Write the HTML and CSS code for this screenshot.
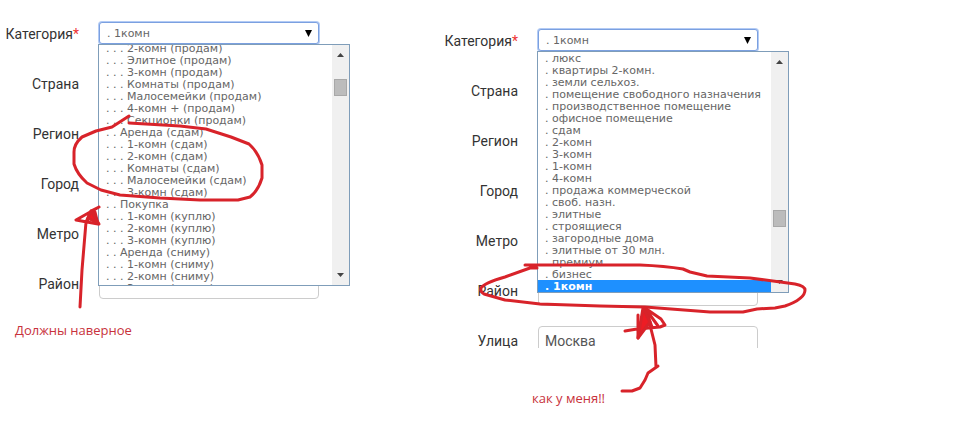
FILE: index.html
```html
<!DOCTYPE html>
<html lang="ru">
<head>
<meta charset="utf-8">
<title>Категория</title>
<link rel="stylesheet" href="styles.css">
</head>
<body>
<main class="compare">
  <section class="panel">
    <form class="form">
      <div class="row">
        <label class="label" for="category-a">Категория<span class="required">*</span></label>
        <div class="field">
          <select class="select" id="category-a"><option>. 1комн</option></select>
          <svg class="caret" viewBox="0 0 7 7" aria-hidden="true"><path d="M0 0h7L3.500 7z"/></svg>
          <div class="dropdown">
            <ul class="options options-scrolled" role="listbox" aria-label="Категория">
              <li role="option">. . . 2-комн (продам)</li>
              <li role="option">. . . Элитное (продам)</li>
              <li role="option">. . . 3-комн (продам)</li>
              <li role="option">. . . Комнаты (продам)</li>
              <li role="option">. . . Малосемейки (продам)</li>
              <li role="option">. . . 4-комн + (продам)</li>
              <li role="option">. . . Секционки (продам)</li>
              <li role="option">. . Аренда (сдам)</li>
              <li role="option">. . . 1-комн (сдам)</li>
              <li role="option">. . . 2-комн (сдам)</li>
              <li role="option">. . . Комнаты (сдам)</li>
              <li role="option">. . . Малосемейки (сдам)</li>
              <li role="option">. . . 3-комн (сдам)</li>
              <li role="option">. . Покупка</li>
              <li role="option">. . . 1-комн (куплю)</li>
              <li role="option">. . . 2-комн (куплю)</li>
              <li role="option">. . . 3-комн (куплю)</li>
              <li role="option">. . Аренда (сниму)</li>
              <li role="option">. . . 1-комн (сниму)</li>
              <li role="option">. . . 2-комн (сниму)</li>
              <li role="option">. . . 3-комн (сниму)</li>
            </ul>
            <div class="scrollbar" aria-hidden="true">
              <svg class="arrow" viewBox="0 0 7 4"><path d="M0 4h7L3.500 0z"/></svg>
              <div class="track"><div class="thumb thumb-high"></div></div>
              <svg class="arrow" viewBox="0 0 7 4"><path d="M0 0h7L3.500 4z"/></svg>
            </div>
          </div>
        </div>
      </div>
      <div class="row"><label class="label" for="country-a">Страна</label><input class="input" id="country-a" type="text"></div>
      <div class="row"><label class="label" for="region-a">Регион</label><input class="input" id="region-a" type="text"></div>
      <div class="row"><label class="label" for="city-a">Город</label><input class="input" id="city-a" type="text"></div>
      <div class="row"><label class="label" for="metro-a">Метро</label><input class="input" id="metro-a" type="text"></div>
      <div class="row"><label class="label" for="district-a">Район</label><input class="input" id="district-a" type="text"></div>
    </form>
    <p class="note note-left">Должны наверное</p>
    <svg class="ink" viewBox="0 0 439 437" aria-hidden="true">
      <path d="M129 116L112 127L96 131L82 137Q74 144 74 152V164Q77 174 87 183L101 190L120 195L160 198L200 200H238L250 197Q258 191 262 178V165Q258 152 249 144L231 137L206 129L180 126L129 123"/>
      <path d="M80 307L82 270L86 222L91 211L99 207L76 220L98 224L95 212L86 222"/>
      <path class="ink-fill" d="M91 211L99 224L88 218z"/>
    </svg>
  </section>

  <section class="panel">
    <form class="form form-lower">
      <div class="row">
        <label class="label" for="category-b">Категория<span class="required">*</span></label>
        <div class="field">
          <select class="select" id="category-b"><option>. 1комн</option></select>
          <svg class="caret" viewBox="0 0 7 7" aria-hidden="true"><path d="M0 0h7L3.500 7z"/></svg>
          <div class="dropdown">
            <ul class="options" role="listbox" aria-label="Категория">
              <li role="option">. люкс</li>
              <li role="option">. квартиры 2-комн.</li>
              <li role="option">. земли сельхоз.</li>
              <li role="option">. помещение свободного назначения</li>
              <li role="option">. производственное помещение</li>
              <li role="option">. офисное помещение</li>
              <li role="option">. сдам</li>
              <li role="option">. 2-комн</li>
              <li role="option">. 3-комн</li>
              <li role="option">. 1-комн</li>
              <li role="option">. 4-комн</li>
              <li role="option">. продажа коммерческой</li>
              <li role="option">. своб. назн.</li>
              <li role="option">. элитные</li>
              <li role="option">. строящиеся</li>
              <li role="option">. загородные дома</li>
              <li role="option">. элитные от 30 млн.</li>
              <li role="option">. премиум</li>
              <li role="option">. бизнес</li>
              <li role="option" class="selected" aria-selected="true">. 1комн</li>
            </ul>
            <div class="scrollbar" aria-hidden="true">
              <svg class="arrow" viewBox="0 0 7 4"><path d="M0 4h7L3.500 0z"/></svg>
              <div class="track"><div class="thumb thumb-low"></div></div>
              <svg class="arrow" viewBox="0 0 7 4"><path d="M0 0h7L3.500 4z"/></svg>
            </div>
          </div>
        </div>
      </div>
      <div class="row"><label class="label" for="country-b">Страна</label><input class="input" id="country-b" type="text"></div>
      <div class="row"><label class="label" for="region-b">Регион</label><input class="input" id="region-b" type="text"></div>
      <div class="row"><label class="label" for="city-b">Город</label><input class="input" id="city-b" type="text"></div>
      <div class="row"><label class="label" for="metro-b">Метро</label><input class="input" id="metro-b" type="text"></div>
      <div class="row"><label class="label" for="district-b">Район</label><input class="input" id="district-b" type="text"></div>
      <div class="row row-cut"><label class="label" for="street-b">Улица</label><input class="input" id="street-b" type="text" value="Москва"></div>
    </form>
    <p class="note note-right">как у меня!!</p>
    <svg class="ink" viewBox="439 0 439 437" aria-hidden="true">
      <path d="M525 265H640Q665 266 683 269L690 272L707 276L750 278L795 284Q805 286 805 290Q805 299 785 306L775 308L757 309L743 312H710L645 307L600 306L540 304L505 300L484 294Q480 292 481 288Q484 283 505 277L530 268H537"/>
      <path d="M622 391H632L640 388L645 380L648 373L658 366L656 367L655 345L650 325L644 308L638 338V315M625 331L637 329L660 327L665 325L661 319L645 308L658 326M645 308L652 327"/>
      <path class="ink-fill" d="M643 308L650 322L638 338z"/>
    </svg>
  </section>
</main>
</body>
</html>
```
FILE: styles.css
```css
* { box-sizing: border-box; }

body {
  margin: 0;
  background: #fff;
  color: #333;
  font: 14px/20px Roboto, "Open Sans", sans-serif;
}

.compare {
  display: flex;
  gap: 120px;
}

.panel { position: relative; }

.form {
  display: grid;
  gap: 20px;
  padding-top: 19px;
}

.form-lower { padding-top: 26px; }

.row {
  display: grid;
  grid-template-columns: 79px 220px;
  column-gap: 20px;
  align-items: center;
  height: 30px;
}

.row-cut {
  height: 22px;
  overflow: hidden;
  align-items: start;
}

.label {
  text-align: right;
  white-space: nowrap;
}

.row-cut .label { padding-top: 5px; }

.required { color: #e33; }

.field {
  position: relative;
  display: flex;
  align-items: center;
  align-self: start;
  padding-top: 3px;
}

.select {
  appearance: none;
  width: 100%;
  height: 22px;
  padding: 1px 7px 0;
  border: 1px solid #7ba0e0;
  border-radius: 3px;
  box-shadow: 0 0 0 1px #b3cbf5;
  background: #fff;
  color: #666;
  font: 11px/18px "DejaVu Sans", sans-serif;
}

.caret {
  position: absolute;
  right: 7px;
  width: 7px;
  height: 7px;
}

.input {
  width: 100%;
  height: 30px;
  padding: 0 6px;
  border: 1px solid #ccc;
  border-radius: 4px;
  background: #fff;
  color: #555;
  font: inherit;
}

.dropdown {
  position: absolute;
  z-index: 1;
  top: 100%;
  left: -1px;
  display: flex;
  width: 252px;
  height: 242px;
  border: 1px solid #7f9db9;
  background: #fff;
}

.options {
  flex: 1;
  height: 240px;
  margin: 0;
  padding: 0;
  overflow: hidden;
  list-style: none;
  color: #666;
  font: 11px/12px "DejaVu Sans", sans-serif;
}

.options li {
  height: 12px;
  padding: 1px 0 0 7px;
  white-space: nowrap;
}

.options-scrolled li:first-child { margin-top: -3px; }

.options .selected {
  background: #1e90ff;
  color: #fff;
  font-weight: bold;
}

.scrollbar {
  display: flex;
  flex-direction: column;
  align-items: center;
  width: 17px;
  padding: 8px 0;
  background: #f0f0f0;
}

.arrow {
  width: 7px;
  height: 4px;
  fill: #444;
}

.track { flex: 1; }

.thumb {
  width: 13px;
  height: 17px;
  border: 1px solid #a8a8a8;
  background: #bcbcbc;
}

.thumb-high { margin-top: 22px; }
.thumb-low { margin-top: 146px; }

.note {
  margin: 0;
  color: #c8323c;
  font: 13px/20px "Open Sans", "Noto Sans", sans-serif;
}

.note-left { padding: 21px 0 0 15px; }
.note-right { padding: 40px 0 0 93px; }

.ink {
  position: absolute;
  z-index: 2;
  top: 0;
  left: 0;
  width: 439px;
  height: 437px;
  fill: none;
  stroke: #d8232a;
  stroke-width: 3;
  stroke-linecap: round;
  stroke-linejoin: round;
  pointer-events: none;
}

.ink-fill { fill: #ed1c24; }
```
